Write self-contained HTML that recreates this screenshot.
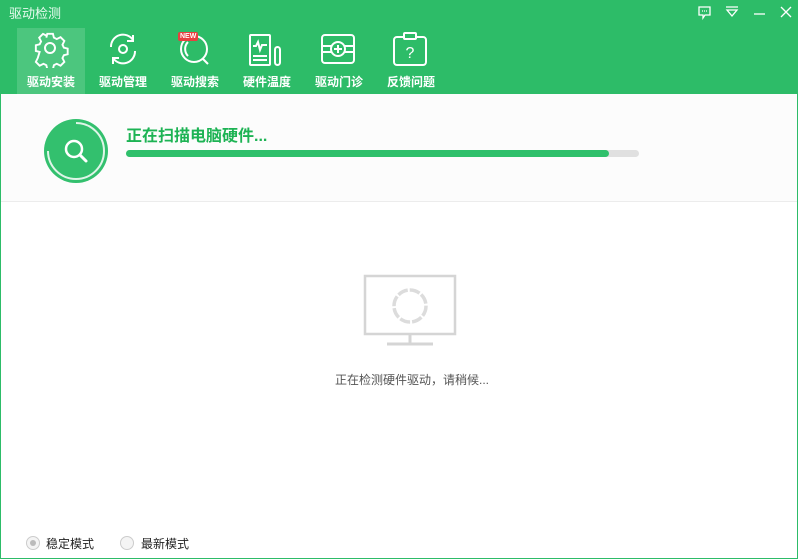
<!DOCTYPE html>
<html><head><meta charset="utf-8"><style>
*{margin:0;padding:0;box-sizing:border-box}
body{width:798px;height:559px;overflow:hidden;background:#fff;font-family:"Liberation Sans","Noto Sans CJK SC",sans-serif;position:relative}
.hdr{position:absolute;left:0;top:0;width:798px;height:94px;background:#2dbc68}
.title{position:absolute;left:9px;top:3px;color:#e8fbef;font-size:13px}
.tab{position:absolute;top:28px;width:68px;height:66px;text-align:center;color:#fff;font-size:12px}
.tab.act{background:rgba(255,255,255,0.15)}
.tab svg{position:absolute;left:16px;top:4px}
.tab span{position:absolute;left:0;right:0;top:45px;font-weight:bold}
.frame{position:absolute;left:0;top:94px;width:798px;height:465px;border:1px solid #2dbc68;border-top:none}
.top{position:absolute;left:1px;top:94px;width:796px;height:108px;background:#fcfcfc;border-bottom:1px solid #ececec}
</style></head><body>
<div class="hdr">
<div class="title">驱动检测</div>
<svg style="position:absolute;left:697px;top:5px" width="100" height="16" fill="none" stroke="#fff" stroke-width="1.3">
<path d="M2 2h11v8H8l-2 3v-3H2z"/><path d="M5 6h1M7 6h1M9 6h1"/>
<path d="M29 2h12M30 5h10l-5 6z"/>
<path d="M57 9h11"/>
<path d="M84 2l10 10M94 2L84 12"/>
</svg>
<div class="tab act" style="left:17px"><svg width="36" height="36" fill="none" stroke="#fff" stroke-width="2"><path d="M15 3h6l1 4 3 1.5 4-2 4 4-2 4 1.5 3 4 1v6l-4 1-1.5 3 2 4-4 4-4-2-3 1.5-1 4h-6l-1-4-3-1.5-4 2-4-4 2-4L7 22l-4-1v-6l4-1 1.5-3-2-4 4-4 4 2L14 7z" transform="translate(0,-1) scale(0.95)"/><circle cx="17" cy="16" r="5"/></svg><span>驱动安装</span></div>
<div class="tab" style="left:89px"><svg width="36" height="36" fill="none" stroke="#fff" stroke-width="2"><path d="M6 15a12 12 0 0 1 22-7M30 19a12 12 0 0 1-22 7"/><path d="M28 3v6h-6M8 32v-6h6"/><circle cx="18" cy="17" r="4"/></svg><span>驱动管理</span></div>
<div class="tab" style="left:161px"><svg width="40" height="36" fill="none" stroke="#fff" stroke-width="2"><circle cx="17" cy="17" r="13"/><path d="M26 27l5 5"/><path d="M11 10a10 10 0 0 0 0 14"/></svg><span>驱动搜索</span>
<div style="position:absolute;left:17px;top:4px;background:#e84040;color:#fff;font-size:7px;font-weight:bold;padding:0 2px;line-height:9px;border-radius:2px">NEW</div></div>
<div class="tab" style="left:233px"><svg width="36" height="36" fill="none" stroke="#fff" stroke-width="2"><rect x="1" y="3" width="20" height="30" rx="1"/><path d="M4 14h3l2-4 2 8 2-5h5M4 24h14M4 28h14"/><rect x="26" y="15" width="5" height="18" rx="2.5"/></svg><span>硬件温度</span></div>
<div class="tab" style="left:305px"><svg width="36" height="36" fill="none" stroke="#fff" stroke-width="2"><rect x="1" y="3" width="32" height="28" rx="3"/><circle cx="17" cy="17" r="7"/><path d="M17 13v8M13 17h8M1 14h9M1 20h9M24 14h9M24 20h9"/></svg><span>驱动门诊</span></div>
<div class="tab" style="left:377px"><svg width="36" height="36" fill="none" stroke="#fff" stroke-width="2"><rect x="1" y="5" width="32" height="28" rx="3"/><rect x="11" y="1" width="12" height="6" rx="1" fill="#2dbc68"/><text x="17" y="26" fill="#fff" stroke="none" font-size="16" text-anchor="middle" font-family="Liberation Sans">?</text></svg><span>反馈问题</span></div>
</div>
<div class="frame"></div>
<div class="top">
<svg style="position:absolute;left:42px;top:24px" width="66" height="66"><circle cx="33" cy="33" r="32" fill="#33c06e"/><path d="M33 5a28 28 0 1 1-28 28" fill="none" stroke="#dff5e8" stroke-width="2"/><circle cx="31" cy="31" r="8" fill="none" stroke="#fff" stroke-width="2.5"/><path d="M37 37l6 6" stroke="#fff" stroke-width="3" stroke-linecap="round"/></svg>
<div style="position:absolute;left:125px;top:28px;color:#1db354;font-size:16px;font-weight:bold">正在扫描电脑硬件...</div>
<div style="position:absolute;left:125px;top:56px;width:513px;height:7px;border-radius:4px;background:#e0e0e0"><div style="width:483px;height:7px;border-radius:4px;background:#2fc06b"></div></div>
</div>
<svg style="position:absolute;left:362px;top:274px" width="96" height="72" fill="none" stroke="#d5d5d5" stroke-width="2.5"><rect x="3" y="2" width="90" height="58"/><path d="M25 70h46M48 60v10" stroke-width="3"/><circle cx="48" cy="32" r="16" stroke-width="3.5" stroke-dasharray="10.5 2" stroke="#dcdcdc"/></svg>
<div style="position:absolute;left:335px;top:371px;font-size:12px;color:#555">正在检测硬件驱动，请稍候...</div>
<div style="position:absolute;left:26px;top:536px;width:14px;height:14px;border-radius:50%;border:1px solid #ccc;background:#f4f4f4"><div style="margin:3px;width:6px;height:6px;border-radius:50%;background:#bbb"></div></div>
<div style="position:absolute;left:46px;top:535px;font-size:12px;color:#222">稳定模式</div>
<div style="position:absolute;left:120px;top:536px;width:14px;height:14px;border-radius:50%;border:1px solid #ccc;background:#f4f4f4"></div>
<div style="position:absolute;left:141px;top:535px;font-size:12px;color:#222">最新模式</div>
</body></html>
